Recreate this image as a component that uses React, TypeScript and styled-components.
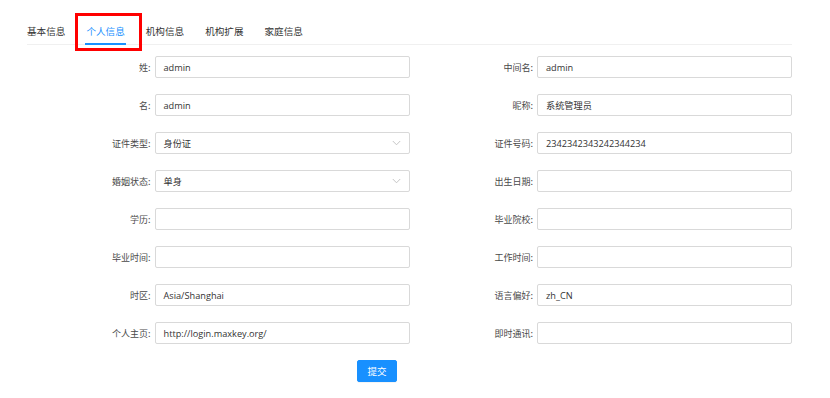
import React from "react";
import styled, { createGlobalStyle } from "styled-components";

const Global = createGlobalStyle`
  html, body { margin: 0; padding: 0; background: #fff; }
  body { font-family: "Open Sans", "Noto Sans CJK SC", sans-serif; }
`;

const Page = styled.div`
  width: 830px;
  height: 398px;
  box-sizing: border-box;
  padding: 16px 0 0 27px;
  position: relative;
`;

const TabBar = styled.div`
  width: 765px;
  height: 29px;
  display: flex;
  align-items: stretch;
  gap: 21px;
  border-bottom: 1px solid #f0f0f0;
  box-sizing: border-box;
`;

const Tab = styled.div<{ $active?: boolean }>`
  position: relative;
  display: flex;
  align-items: center;
  font-size: 9.6px;
  color: ${(p) => (p.$active ? "#1890ff" : "#333")};
  font-family: "Noto Sans CJK SC", sans-serif;
  padding-top: 1px;
  &::after {
    content: "";
    display: ${(p) => (p.$active ? "block" : "none")};
    position: absolute;
    left: -1px;
    right: -1px;
    bottom: -1px;
    height: 2px;
    background: #1890ff;
  }
`;

const Highlight = styled.div`
  position: absolute;
  left: 75px;
  top: 13px;
  width: 67px;
  height: 38px;
  border: 3px solid #ff0000;
  box-sizing: border-box;
  pointer-events: none;
`;

const FormGrid = styled.div`
  width: 765px;
  margin-top: 11px;
  display: grid;
  grid-template-columns: 1fr 1fr;
  row-gap: 16px;
`;

const Field = styled.div`
  display: grid;
  grid-template-columns: 127.5px 1fr;
  align-items: center;
`;

const Label = styled.label`
  text-align: right;
  padding-right: 4px;
  font-size: 9px;
  color: #4a4a4a;
  font-family: "Noto Sans CJK SC", sans-serif;
  white-space: nowrap;
`;

const InputBox = styled.div`
  position: relative;
  height: 22px;
  border: 1px solid #d9d9d9;
  border-radius: 2px;
  box-sizing: border-box;
  display: flex;
  align-items: center;
  padding: 0 8px;
  font-size: 9.2px;
  color: #333;
  font-family: "Open Sans", "Noto Sans CJK SC", sans-serif;
  background: #fff;
`;

const Chevron = styled.svg`
  position: absolute;
  right: 8px;
  top: 50%;
  margin-top: -3px;
`;

const ButtonRow = styled.div`
  display: flex;
  margin-top: 16px;
  padding-left: 330px;
`;

const Button = styled.button`
  width: 40px;
  height: 22px;
  background: #1890ff;
  border: 1px solid #1890ff;
  border-radius: 2px;
  color: #fff;
  font-size: 9.5px;
  font-family: "Noto Sans CJK SC", sans-serif;
  padding: 0;
  box-shadow: 0 1px 0 rgba(0, 0, 0, 0.045);
`;

type F = { label: string; value?: string; select?: boolean };

const fields: F[] = [
  { label: "姓", value: "admin" },
  { label: "中间名", value: "admin" },
  { label: "名", value: "admin" },
  { label: "昵称", value: "系统管理员" },
  { label: "证件类型", value: "身份证", select: true },
  { label: "证件号码", value: "2342342343242344234" },
  { label: "婚姻状态", value: "单身", select: true },
  { label: "出生日期", value: "" },
  { label: "学历", value: "" },
  { label: "毕业院校", value: "" },
  { label: "毕业时间", value: "" },
  { label: "工作时间", value: "" },
  { label: "时区", value: "Asia/Shanghai" },
  { label: "语言偏好", value: "zh_CN" },
  { label: "个人主页", value: "http://login.maxkey.org/" },
  { label: "即时通讯", value: "" },
];

const tabs = ["基本信息", "个人信息", "机构信息", "机构扩展", "家庭信息"];

export default function App() {
  return (
    <>
      <Global />
      <Page>
        <TabBar>
          {tabs.map((t, i) => (
            <Tab key={t} $active={i === 1}>
              {t}
            </Tab>
          ))}
        </TabBar>
        <FormGrid>
          {fields.map((f) => (
            <Field key={f.label}>
              <Label>{f.label}:</Label>
              <InputBox>
                {f.value}
                {f.select && (
                  <Chevron width="9" height="6" viewBox="0 0 9 6">
                    <path d="M0.8 1 L4.5 4.8 L8.2 1" fill="none" stroke="#bfbfbf" strokeWidth="0.9" />
                  </Chevron>
                )}
              </InputBox>
            </Field>
          ))}
        </FormGrid>
        <ButtonRow>
          <Button>提交</Button>
        </ButtonRow>
        <Highlight />
      </Page>
    </>
  );
}
